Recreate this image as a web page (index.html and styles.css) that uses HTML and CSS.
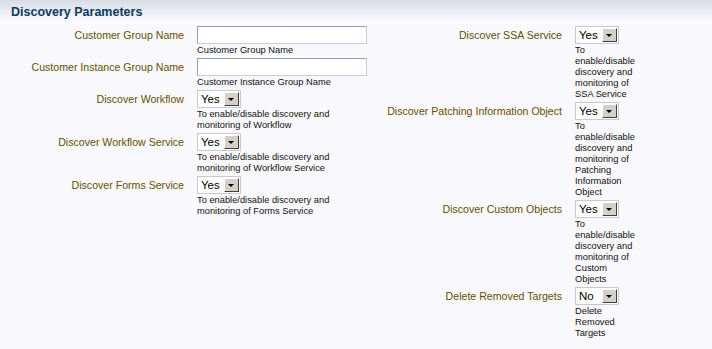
FILE: index.html
```html
<!DOCTYPE html>
<html lang="en">
<head>
  <meta charset="UTF-8">
  <title>Discovery Parameters</title>
  <link rel="stylesheet" href="styles.css">
</head>
<body>
  <div class="header">
    <h2>Discovery Parameters</h2>
  </div>

  <div class="params">
    <div class="panel left">
      <label class="lbl">Customer Group Name</label>
      <div class="field">
        <input type="text" class="txt">
        <div class="help">Customer Group Name</div>
      </div>

      <label class="lbl">Customer Instance Group Name</label>
      <div class="field">
        <input type="text" class="txt">
        <div class="help">Customer Instance Group Name</div>
      </div>

      <label class="lbl sel">Discover Workflow</label>
      <div class="field">
        <span class="select"><span class="val">Yes</span><span class="btn"></span></span>
        <div class="help">To enable/disable discovery and monitoring of Workflow</div>
      </div>

      <label class="lbl sel">Discover Workflow Service</label>
      <div class="field">
        <span class="select"><span class="val">Yes</span><span class="btn"></span></span>
        <div class="help">To enable/disable discovery and monitoring of Workflow Service</div>
      </div>

      <label class="lbl sel">Discover Forms Service</label>
      <div class="field">
        <span class="select"><span class="val">Yes</span><span class="btn"></span></span>
        <div class="help">To enable/disable discovery and monitoring of Forms Service</div>
      </div>
    </div>

    <div class="panel right">
      <label class="lbl sel">Discover SSA Service</label>
      <div class="field">
        <span class="select"><span class="val">Yes</span><span class="btn"></span></span>
        <div class="help">To enable/disable discovery and monitoring of SSA Service</div>
      </div>

      <label class="lbl sel">Discover Patching Information Object</label>
      <div class="field">
        <span class="select"><span class="val">Yes</span><span class="btn"></span></span>
        <div class="help">To enable/disable discovery and monitoring of Patching Information Object</div>
      </div>

      <label class="lbl sel">Discover Custom Objects</label>
      <div class="field">
        <span class="select"><span class="val">Yes</span><span class="btn"></span></span>
        <div class="help">To enable/disable discovery and monitoring of Custom Objects</div>
      </div>

      <label class="lbl sel">Delete Removed Targets</label>
      <div class="field">
        <span class="select"><span class="val">No</span><span class="btn"></span></span>
        <div class="help">Delete Removed Targets</div>
      </div>
    </div>
  </div>
</body>
</html>
```

FILE: styles.css
```css
body, html {
  margin: 0;
  background: #f9f8fc;
  font-family: 'Liberation Sans', Arial, sans-serif;
  color: #000;
}

.header {
  height: 20px;
  background: linear-gradient(#d8dce7, #f9f8fc);
  padding-left: 11px;
}
.header h2 {
  margin: 0;
  padding-top: 5px;
  font-size: 12.5px;
  line-height: 15px;
  color: #0c3a5c;
}

.params {
  display: flex;
  align-items: flex-start;
  padding-top: 6px;
}

.panel {
  display: grid;
  column-gap: 13px;
  align-items: start;
  align-content: start;
}
.left {
  grid-template-columns: 184px 170px;
}
.right {
  margin-left: 3px;
  grid-template-columns: 192px 62px;
}

.lbl {
  text-align: right;
  font-size: 10.6px;
  line-height: 14px;
  color: #665000;
  padding-top: 2px;
  white-space: nowrap;
}

.field {
  padding-bottom: 2px;
}

.txt {
  display: block;
  box-sizing: border-box;
  width: 170px;
  height: 18px;
  margin: 0;
  border: 1px solid #c9ced6;
  border-top-color: #9aa2ae;
  border-left-color: #9aa2ae;
  background: #fff;
}

.help {
  font-size: 9.3px;
  line-height: 11px;
  color: #111;
  padding-top: 1px;
}
.left .help {
  width: 140px;
}

.select {
  display: flex;
  box-sizing: border-box;
  width: 44px;
  height: 18px;
  border: 1px solid #c6cad3;
  background: #fff;
}
.select .val {
  flex: 1;
  font-size: 11.5px;
  line-height: 16px;
  padding-left: 3px;
}
.select .btn {
  position: relative;
  box-sizing: border-box;
  width: 15px;
  margin: 1px 1px 1px 0;
  background: #d4d0c8;
  border: 1px solid;
  border-color: #fff #404040 #404040 #fff;
}
.select .btn:after {
  content: "";
  position: absolute;
  left: 3px;
  top: 5px;
  border-left: 3px solid transparent;
  border-right: 3px solid transparent;
  border-top: 3px solid #000;
}
```
